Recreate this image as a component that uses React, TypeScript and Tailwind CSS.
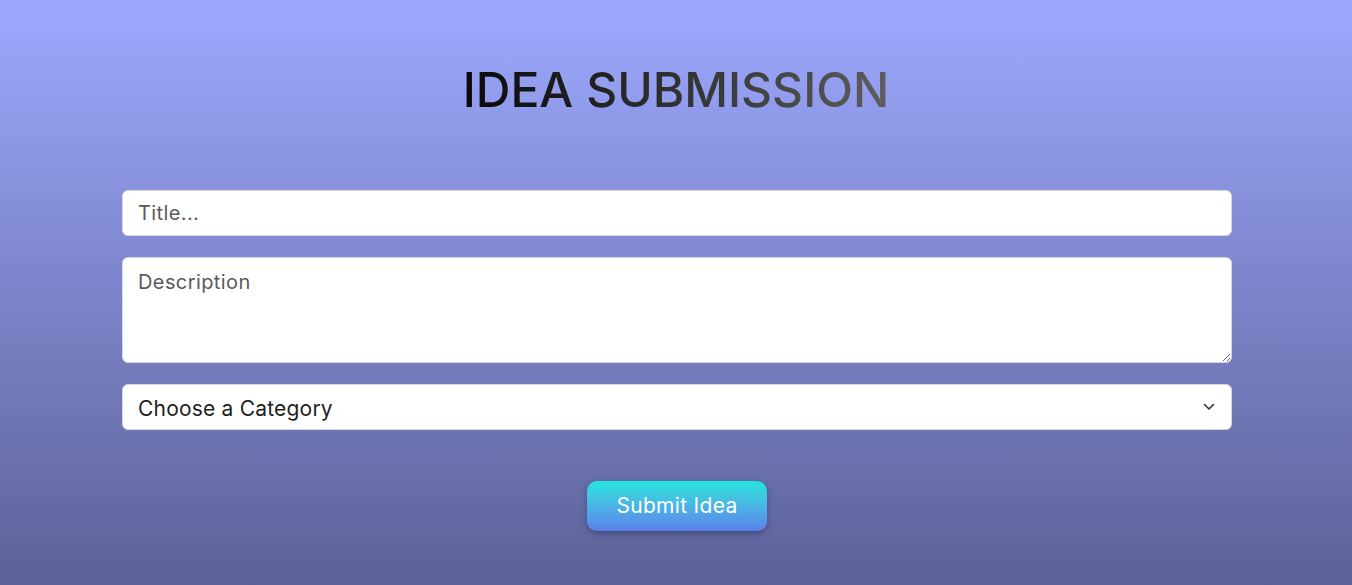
import React from "react";

export default function App() {
  const font = { fontFamily: "Inter, 'Noto Sans', sans-serif" };
  return (
    <div
      className="w-full h-[585px] bg-gradient-to-b from-[#9da9ff] to-[#5c6297] flex flex-col items-center"
      style={font}
    >
      <h1 className="mt-[60px] text-[48px] leading-[60px] font-medium tracking-[0px] bg-gradient-to-r from-[#0a0a0a] to-[#5e5e5e] bg-clip-text text-transparent">
        IDEA SUBMISSION
      </h1>
      <form className="w-full pl-[122px] pr-[120px] mt-[70px] flex flex-col gap-[21px]">
        <input
          type="text"
          placeholder="Title..."
          className="w-full h-[46px] rounded-[6px] bg-white border border-[#d6d6e0] px-[15px] text-[20px] tracking-[0.4px] text-[#222] placeholder:text-[#5a5a5a] outline-none"
        />
        <textarea
          placeholder="Description"
          className="w-full h-[106px] rounded-[6px] bg-white border border-[#d6d6e0] px-[15px] py-[9px] text-[20px] tracking-[0.4px] text-[#222] placeholder:text-[#5a5a5a] outline-none block"
        />
        <div className="relative w-full">
          <select className="appearance-none w-full h-[46px] rounded-[6px] bg-white border border-[#d6d6e0] px-[15px] pt-[3px] text-[21px] tracking-[0.2px] text-[#1e1e1e] outline-none">
            <option>Choose a Category</option>
          </select>
          <svg
            className="absolute right-[17px] top-1/2 -translate-y-1/2 pointer-events-none"
            width="12"
            height="8"
            viewBox="0 0 12 8"
            fill="none"
          >
            <path d="M1.5 1.5L6 6L10.5 1.5" stroke="#333" strokeWidth="1.6" strokeLinecap="round" strokeLinejoin="round" />
          </svg>
        </div>
        <div className="flex justify-center mt-[30px]">
          <button
            type="button"
            className="w-[180px] h-[50px] rounded-[10px] bg-gradient-to-b from-[#1ee6dc] to-[#5a7fea] text-white text-[21px] tracking-[0.3px] shadow-[0_3px_6px_rgba(40,40,90,0.45)]"
          >
            Submit Idea
          </button>
        </div>
      </form>
    </div>
  );
}
